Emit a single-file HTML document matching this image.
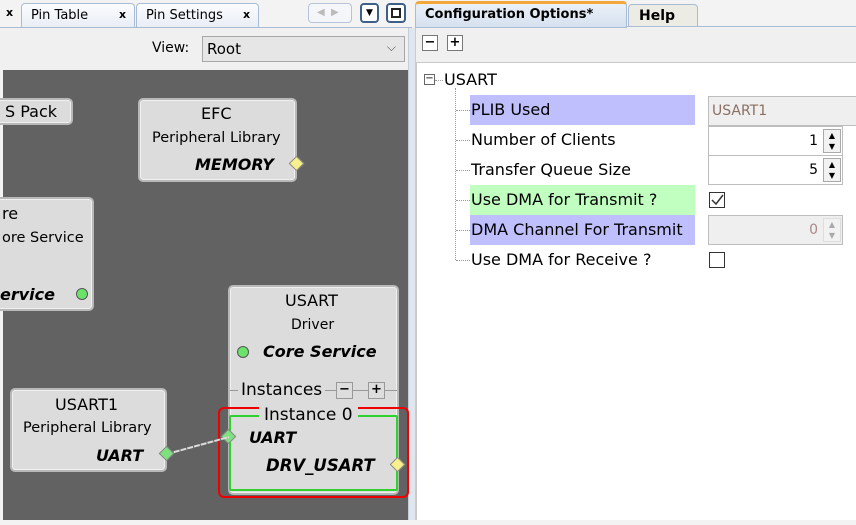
<!DOCTYPE html>
<html><head><meta charset="utf-8"><style>
*{margin:0;padding:0;box-sizing:border-box}
body{width:856px;height:525px;position:relative;overflow:hidden;background:#f3f3f3;font-family:"DejaVu Sans","Liberation Sans",sans-serif;font-size:13px;color:#000}
.a{position:absolute}
.tab{position:absolute;top:3px;height:24px;border:1px solid #a9bcd6;border-bottom:none;border-radius:4px 4px 0 0;background:linear-gradient(#fbfcfe,#e9eef5);font-size:13px;padding:4px 0 0 9px}
.x{position:absolute;font-weight:bold;font-size:11px;top:6px}
.box{position:absolute;background:#dcdcdc;border:2px solid #b8b8b8;border-radius:5px;box-shadow:0 0 0 1px #f0f0f0 inset}
.t{position:absolute;white-space:nowrap;font-family:"DejaVu Sans",sans-serif}
.bi{font-weight:bold;font-style:italic;font-size:16px}
.dia{position:absolute;width:11px;height:11px;transform:rotate(45deg);border:1px solid #888}
.row{position:absolute;left:470px;height:30px;line-height:30px;font-size:16px;padding-left:1px;white-space:nowrap}
.fld{position:absolute;height:30px;border:1px solid #bdbdbd;background:#fff;text-align:right;font-size:14px;line-height:28px}
.sp{position:absolute;right:1px;top:2px;width:18px;height:24px;border:1px solid #aaa;background:#f2f2f2}
.cb{position:absolute;left:709px;width:16px;height:16px;border:1px solid #333;background:#fff}
.dot{position:absolute;border-left:1px dotted #999}
.hd{position:absolute;border-top:1px dotted #999;width:14px}
</style></head><body>
<div class="a" style="left:0;top:27px;width:412px;height:1px;background:#a9bcd6"></div>
<div class="x" style="left:6px">x</div>
<div class="tab" style="left:21px;width:114px">Pin Table<span class="x" style="left:97px;top:4px">x</span></div>
<div class="tab" style="left:136px;width:123px">Pin Settings<span class="x" style="left:106px;top:4px">x</span></div>
<div class="a" style="left:308px;top:3px;width:44px;height:20px;border:1px solid #b5c4d8;border-radius:4px;background:#f4f6f9;color:#bbb;font-size:10px;line-height:18px;padding-left:8px">◀ &nbsp;▶</div>
<div class="a" style="left:360px;top:3px;width:19px;height:20px;border:2px solid #3f5f86;border-radius:4px;background:#fff;font-size:9px;text-align:center;line-height:16px">▼</div>
<div class="a" style="left:386px;top:3px;width:20px;height:20px;border:2px solid #3f5f86;border-radius:4px;background:#fff"><div class="a" style="left:3px;top:3px;width:10px;height:10px;border:2px solid #222"></div></div>
<div class="a" style="left:0;top:28px;width:410px;height:42px;background:#f0f0f0;border-right:1px solid #c9d3df"></div>
<div class="t" style="left:152px;top:40px;font-size:14px">View:</div>
<div class="a" style="left:202px;top:36px;width:203px;height:26px;border:1px solid #a7a7a7;background:#e6e6e6;font-size:15px;padding:3px 0 0 4px">Root<span class="a" style="right:8px;top:3px;color:#555;font-size:12px">⌵</span></div>
<div class="a" style="left:3px;top:70px;width:405px;height:450px;background:#626262"></div>
<div class="a" style="left:408px;top:28px;width:8px;height:492px;background:#dfe6ee;border-left:1px solid #c3ccd7;border-right:1px solid #c3ccd7"></div>
<div class="box" style="left:-10px;top:98px;width:83px;height:27px"><div class="t" style="left:13px;top:2px;font-size:16px">S Pack</div></div>
<div class="box" style="left:138px;top:98px;width:159px;height:84px">
<div class="t" style="left:61px;top:4px;font-size:16px">EFC</div>
<div class="t" style="left:12px;top:30px;font-size:14.5px">Peripheral Library</div>
<div class="t bi" style="left:55px;top:55px">MEMORY</div></div>
<div class="dia" style="left:291px;top:158px;background:#f7f08c"></div>
<div class="box" style="left:-20px;top:197px;width:114px;height:114px">
<div class="t" style="left:20px;top:5px;font-size:16px">re</div>
<div class="t" style="left:20px;top:31px;font-size:14.5px">ore Service</div>
<div class="t bi" style="left:18px;top:86px">ervice</div>
<div class="a" style="left:94px;top:89px;width:12px;height:12px;border-radius:50%;background:#6be36b;border:1px solid #555"></div></div>
<div class="box" style="left:228px;top:285px;width:171px;height:210px">
<div class="t" style="left:55px;top:4px;font-size:16px">USART</div>
<div class="t" style="left:61px;top:30px;font-size:14px">Driver</div>
<div class="a" style="left:7px;top:59px;width:12px;height:12px;border-radius:50%;background:#6be36b;border:1px solid #555"></div>
<div class="t bi" style="left:33px;top:55px;font-size:16px">Core Service</div>
<div class="a" style="left:0;top:103px;width:167px;border-top:1px solid #999"></div>
<div class="t" style="left:8px;top:93px;font-size:17px;background:#dcdcdc;padding:0 3px">Instances</div>
<div class="a" style="left:106px;top:95px;width:17px;height:17px;border:1px solid #999;background:#ddd;font-weight:bold;text-align:center;line-height:14px">−</div>
<div class="a" style="left:138px;top:95px;width:17px;height:17px;border:1px solid #999;background:#ddd;font-weight:bold;text-align:center;line-height:14px">+</div>
</div>
<div class="a" style="left:218px;top:407px;width:191px;height:91px;border:2px solid #e00;border-radius:6px"></div>
<div class="a" style="left:229px;top:415px;width:169px;height:76px;border:2px solid #2ed12e;border-radius:2px"></div>
<div class="t" style="left:259px;top:405px;font-size:17px;background:#dcdcdc;padding:0 5px">Instance 0</div>
<div class="t bi" style="left:249px;top:428px;font-size:16px">UART</div>
<div class="t bi" style="left:266px;top:456px;font-size:16.5px">DRV_USART</div>
<div class="dia" style="left:392px;top:459px;background:#f7f08c"></div>
<div class="dia" style="left:223px;top:431px;background:#7ee07e"></div>
<div class="box" style="left:10px;top:388px;width:157px;height:84px">
<div class="t" style="left:43px;top:5px;font-size:16px">USART1</div>
<div class="t" style="left:11px;top:30px;font-size:14.5px">Peripheral Library</div>
<div class="t bi" style="left:84px;top:56px;font-size:16px">UART</div></div>
<svg class="a" style="left:0;top:0" width="410" height="520"><line x1="167" y1="454" x2="229" y2="437" stroke="#ddd" stroke-width="2" stroke-dasharray="6 1"/></svg>
<div class="dia" style="left:161px;top:448px;background:#7ee07e"></div>
<div class="a" style="left:416px;top:26px;width:440px;height:1px;background:#a9bcd6"></div>
<div class="a" style="left:415px;top:1px;width:212px;height:27px;border:1px solid #a9bcd6;border-top:3px solid #f4a73b;border-radius:4px 4px 0 0;background:linear-gradient(#eaf0f8,#d6e1ef);font-weight:bold;font-size:13px;padding:3px 0 0 9px">Configuration Options*</div>
<div class="a" style="left:628px;top:4px;width:70px;height:23px;border:1px solid #a9bcd6;border-radius:4px 4px 0 0;background:#ecebe4;font-weight:bold;font-size:14px;padding:3px 0 0 10px">Help</div>
<div class="a" style="left:416px;top:28px;width:440px;height:34px;background:#f0f0f0"></div>
<div class="a" style="left:422px;top:35px;width:16px;height:16px;border:1px solid #777;background:#fff;font-weight:bold;text-align:center;line-height:13px">−</div>
<div class="a" style="left:447px;top:35px;width:16px;height:16px;border:1px solid #777;background:#fff;font-weight:bold;text-align:center;line-height:13px">+</div>
<div class="a" style="left:416px;top:62px;width:440px;height:458px;background:#fff;border-top:1px solid #c8c8c8;border-left:1px solid #c8c8c8"></div>
<div class="a" style="left:424px;top:74px;width:11px;height:11px;border:1px solid #666;font-size:10px;line-height:8px;text-align:center">−</div>
<div class="hd" style="left:435px;top:80px;width:8px"></div>
<div class="t" style="left:444px;top:70px;font-size:16px">USART</div>
<div class="dot" style="left:455px;top:88px;height:172px"></div>
<div class="hd" style="left:456px;top:110px"></div><div class="hd" style="left:456px;top:140px"></div><div class="hd" style="left:456px;top:170px"></div><div class="hd" style="left:456px;top:200px"></div><div class="hd" style="left:456px;top:230px"></div><div class="hd" style="left:456px;top:260px"></div>
<div class="row" style="top:95px;width:225px;background:#bfbffe">PLIB Used</div>
<div class="row" style="top:125px">Number of Clients</div>
<div class="row" style="top:155px">Transfer Queue Size</div>
<div class="row" style="top:185px;width:225px;background:#c1ffc1">Use DMA for Transmit ?</div>
<div class="row" style="top:215px;width:225px;background:#bfbffe;overflow:hidden">DMA Channel For Transmit</div>
<div class="row" style="top:245px">Use DMA for Receive ?</div>
<div class="fld" style="left:708px;top:96px;width:150px;background:#efefef;text-align:left;padding-left:3px;color:#8a7060">USART1</div>
<div class="fld" style="left:708px;top:126px;width:135px;padding-right:24px">1<div class="sp"><div style="font-size:8px;line-height:11px;text-align:center">▲<br>▼</div></div></div>
<div class="fld" style="left:708px;top:155px;width:135px;padding-right:24px">5<div class="sp"><div style="font-size:8px;line-height:11px;text-align:center">▲<br>▼</div></div></div>
<div class="cb" style="top:192px"><svg width="14" height="14" style="position:absolute;left:0;top:0"><path d="M2 7 L6 11 L13 2" stroke="#333" stroke-width="1.5" fill="none"/></svg></div>
<div class="fld" style="left:708px;top:215px;width:135px;padding-right:24px;background:#efefef;color:#a88">0<div class="sp" style="border-color:#ddd;color:#aaa"><div style="font-size:8px;line-height:11px;text-align:center">▲<br>▼</div></div></div>
<div class="cb" style="top:252px"></div>
</body></html>
